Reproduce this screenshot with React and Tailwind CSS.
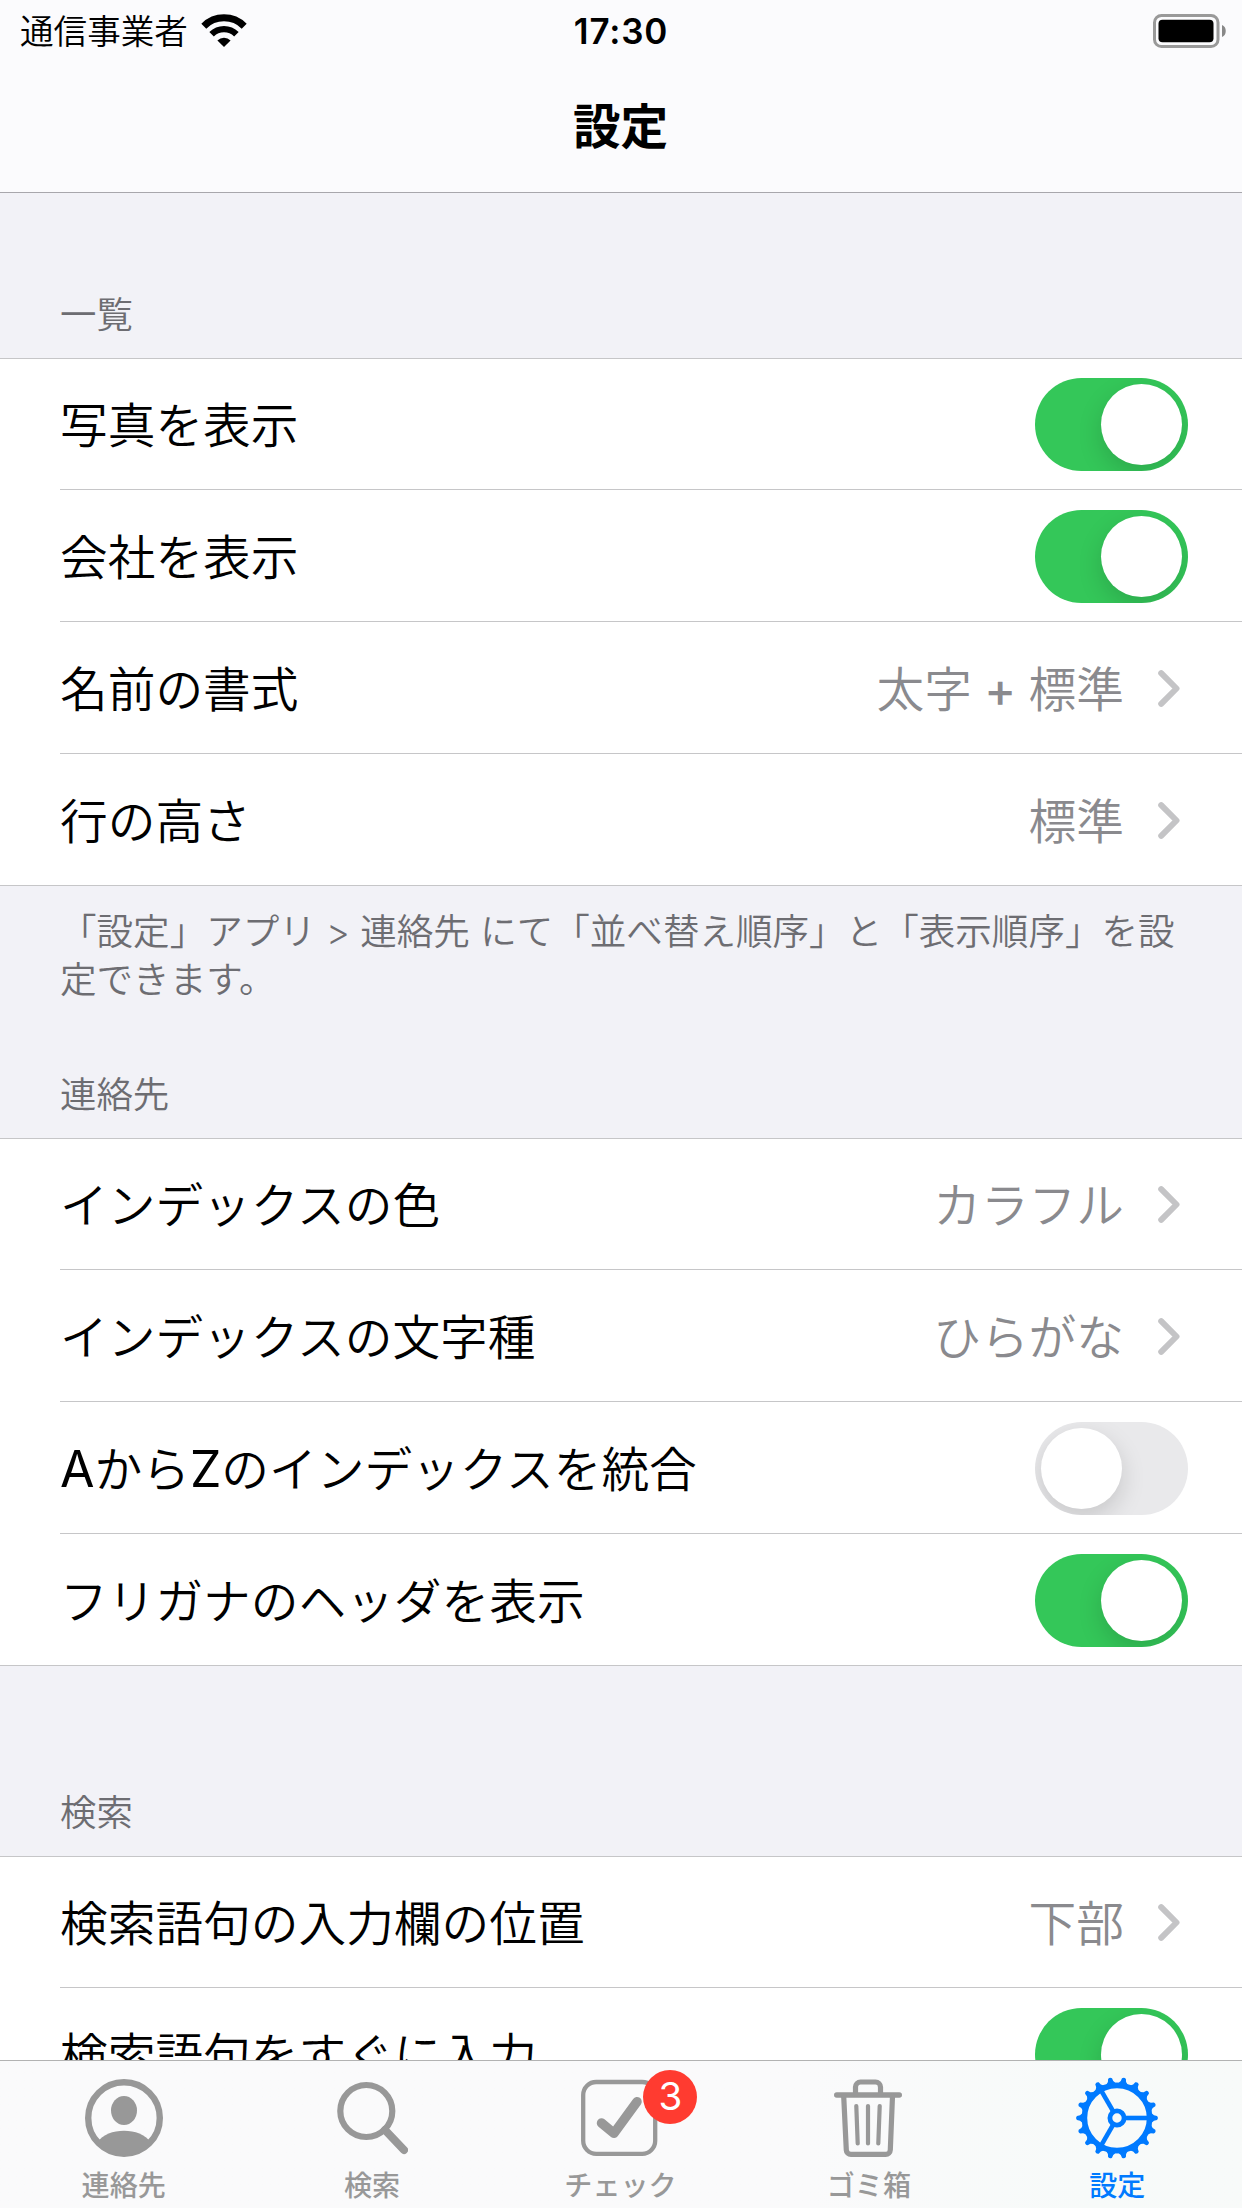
import { useState } from "react";

const initialSections = [
  {
    title: "一覧",
    headerClass: "h-[165px]",
    rows: [
      { id: "photo", label: "写真を表示", on: true },
      { id: "company", label: "会社を表示", on: true },
      { id: "format", label: "名前の書式", value: "太字 + 標準" },
      { id: "height", label: "行の高さ", value: "標準" },
    ],
    footer: ["「設定」アプリ > 連絡先 にて「並べ替え順序」と「表示順序」を設", "定できます。"],
  },
  {
    title: "連絡先",
    headerClass: "h-[124px]",
    rows: [
      { id: "color", label: "インデックスの色", value: "カラフル" },
      { id: "script", label: "インデックスの文字種", value: "ひらがな" },
      { id: "merge", label: "AからZのインデックスを統合", on: false },
      { id: "kana", label: "フリガナのヘッダを表示", on: true },
    ],
  },
  {
    title: "検索",
    headerClass: "h-[190px]",
    rows: [
      { id: "position", label: "検索語句の入力欄の位置", value: "下部" },
      { id: "instant", label: "検索語句をすぐに入力", on: true },
    ],
  },
];

function WifiIcon() {
  return (
    <svg width="46" height="33" viewBox="0 0 46 33" fill="none">
      <path d="M2.8 12.2a28.6 28.6 0 0 1 40.4 0" stroke="#000" strokeWidth="7" />
      <path d="M10.6 20.2a17.6 17.6 0 0 1 24.8 0" stroke="#000" strokeWidth="6.4" />
      <path d="M23 33l-6.6-6.6a9.4 9.4 0 0 1 13.2 0z" fill="#000" />
    </svg>
  );
}

function BatteryIcon() {
  return (
    <svg width="74" height="34" viewBox="0 0 74 34" fill="none">
      <rect x="1.5" y="1.5" width="63.5" height="31" rx="7" stroke="#999" strokeWidth="3" />
      <rect x="5.5" y="5.7" width="55" height="22.6" rx="4" fill="#000" />
      <path d="M69 11c5 1.5 5 10.5 0 12z" fill="#888" />
    </svg>
  );
}

function Chevron() {
  return (
    <svg width="22" height="37" viewBox="0 0 22 37" fill="none" className="mt-px mr-[62px] ml-[34px] shrink-0">
      <path d="M3.2 3.2L18.5 18.5L3.2 33.8" stroke="#c4c4c6" strokeWidth="6" strokeLinecap="round" strokeLinejoin="round" />
    </svg>
  );
}

function Toggle({ on, onClick }) {
  return (
    <button
      role="switch"
      aria-checked={on}
      onClick={onClick}
      className={`mt-px mr-[54px] flex h-[93px] w-[153px] shrink-0 overflow-hidden rounded-full p-1.5 ${
        on ? "justify-end bg-[#34c759]" : "justify-start bg-[#e9e9eb]"
      }`}
    >
      <span className="size-[81px] rounded-full bg-white shadow-[0_9px_24px_rgba(0,0,0,0.15)]" />
    </button>
  );
}

// Latin letters and signs are set heavier than the kana around them
function MixedText({ text }) {
  return text.split(/([A-Za-z]+|\+)/).map((part, i) => {
    if (part === "+") {
      return <span key={i} className="-mx-px font-medium">{part}</span>;
    }
    if (/^[A-Za-z]+$/.test(part)) {
      return <span key={i} className="text-[50px] leading-none font-normal">{part}</span>;
    }
    return part;
  });
}

function Row({ row, last, onToggle }) {
  return (
    <div className={`h-[132px] bg-white ${last ? "" : "pl-[60px]"}`}>
      <div className={`flex h-full items-center border-b border-[#c6c6c8] ${last ? "pl-[60px]" : ""}`}>
        <span className="flex-1 pt-[4px] text-[47.7px] leading-[72px] whitespace-nowrap text-black">
          <MixedText text={row.label} />
        </span>
        {row.value ? (
          <>
            <span className="pt-[4px] text-[47.7px] leading-[72px] whitespace-nowrap text-[#8a8a8e]">
              <MixedText text={row.value} />
            </span>
            <Chevron />
          </>
        ) : (
          <Toggle on={row.on} onClick={() => onToggle(row.id)} />
        )}
      </div>
    </div>
  );
}

function ContactIcon() {
  return (
    <svg width="78" height="78" viewBox="0 0 78 78">
      <circle cx="39" cy="39" r="35.8" fill="none" stroke="currentColor" strokeWidth="6.4" />
      <ellipse cx="39" cy="31.5" rx="13" ry="14.5" fill="currentColor" />
      <path d="M12 63.5C18 55.5 28 51.8 39 51.8S60 55.5 66 63.5C59 72 50 76 39 76S19 72 12 63.5z" fill="currentColor" />
    </svg>
  );
}

function SearchIcon() {
  return (
    <svg width="72" height="78" viewBox="0 0 72 78" fill="none" stroke="currentColor">
      <circle cx="30.3" cy="32" r="26" strokeWidth="6.2" />
      <path d="M49 51L68 71" strokeWidth="8" strokeLinecap="round" />
    </svg>
  );
}

function CheckIcon() {
  return (
    <svg width="78" height="78" viewBox="0 0 78 78" fill="none" stroke="currentColor">
      <rect x="2.2" y="3" width="72" height="71.8" rx="13" strokeWidth="4.3" />
      <path d="M20.5 44L33 54.3L56 22.7" strokeWidth="9.5" strokeLinecap="round" strokeLinejoin="round" />
    </svg>
  );
}

function TrashIcon() {
  return (
    <svg width="70" height="78" viewBox="0 0 70 78" fill="none" stroke="currentColor" strokeLinecap="round">
      <path d="M2.7 16H65.3" strokeWidth="5.4" />
      <path d="M21.5 15V8a5 5 0 0 1 5-5h15a5 5 0 0 1 5 5v7" strokeWidth="5.2" />
      <path d="M9.7 17L12.3 71a4.6 4.6 0 0 0 4.6 4.4H51.7a4.6 4.6 0 0 0 4.6-4.4L58.5 17" strokeWidth="5.2" />
      <path d="M22.3 27L23.7 64.5M34 27V64.5M45.7 27L44.3 64.5" strokeWidth="4.2" />
    </svg>
  );
}

function GearIcon() {
  const teeth = Array.from({ length: 18 }, (_, i) => i * 20);
  return (
    <svg width="82" height="82" viewBox="-41 -41 82 82" fill="none" stroke="currentColor">
      <circle r="32.6" strokeWidth="5.6" />
      <circle r="7.1" strokeWidth="4.8" />
      {teeth.map((a) => (
        <path
          key={a}
          d="M33.5 -5.8L37 -2.7L40 -2Q41.8 0 40 2L37 2.7L33.5 5.8z"
          fill="currentColor"
          stroke="none"
          transform={`rotate(${a})`}
        />
      ))}
      {[0, 120, 240].map((a) => (
        <path key={a} d="M8.5 0H31" strokeWidth="4.6" transform={`rotate(${a})`} />
      ))}
    </svg>
  );
}

const tabs = [
  { label: "連絡先", icon: ContactIcon },
  { label: "検索", icon: SearchIcon },
  { label: "チェック", icon: CheckIcon, badge: 3 },
  { label: "ゴミ箱", icon: TrashIcon },
  { label: "設定", icon: GearIcon },
];

function App() {
  const [sections, setSections] = useState(initialSections);
  const [active, setActive] = useState("設定");

  const handleToggle = (id) => {
    setSections((prev) =>
      prev.map((s) => ({
        ...s,
        rows: s.rows.map((r) => (r.id === id ? { ...r, on: !r.on } : r)),
      }))
    );
  };

  return (
    <div
      lang="ja"
      className="flex h-[2208px] w-[1242px] flex-col overflow-hidden bg-[#f2f2f7] font-[Inter,'Noto_Sans_CJK_JP',sans-serif] font-[350]"
    >
      {/* Status bar and title */}
      <header className="h-[193px] shrink-0 border-b border-[#a8a7ac] bg-[#fbfbfd] text-black">
        <div className="grid h-[60px] grid-cols-3 items-center pt-px pr-[15px] pl-[20px]">
          <div className="flex items-center gap-[13px]">
            <span className="pt-[2px] text-[33.6px] leading-[40px]">通信事業者</span>
            <WifiIcon />
          </div>
          <span className="pt-px pr-[5px] text-center text-[35px] leading-[40px] font-semibold tracking-[0.8px]">17:30</span>
          <div className="flex justify-end">
            <BatteryIcon />
          </div>
        </div>
        <h1 className="pt-[33px] pr-px text-center text-[47.6px] leading-[68px] font-bold">設定</h1>
      </header>

      {/* Settings list */}
      <main className="min-h-0 flex-1 overflow-hidden">
        {sections.map((section) => (
          <section key={section.title}>
            <h2
              className={`flex items-end pb-[19px] pl-[60px] text-[36.4px] leading-[48px] font-[350] text-[#6d6d72] ${section.headerClass}`}
            >
              {section.title}
            </h2>
            <div className="relative">
              <div className="absolute top-0 z-10 h-px w-full bg-[#c6c6c8]" />
              {section.rows.map((row, i) => (
                <Row key={row.id} row={row} last={i === section.rows.length - 1} onToggle={handleToggle} />
              ))}
            </div>
            {section.footer && (
              <div className="h-[128px] pt-[22px] pl-[60px] text-[36.55px] leading-[48px] whitespace-nowrap text-[#6d6d72]">
                {section.footer.map((line) => (
                  <p key={line}>{line}</p>
                ))}
              </div>
            )}
          </section>
        ))}
      </main>

      {/* Tab bar */}
      <nav className="grid h-[148px] shrink-0 grid-cols-5 border-t border-[#b2b2b2] bg-linear-to-r from-[#fafafb] from-65% via-[#f7faf9] via-88% to-[#f8faf9]">
        {tabs.map(({ label, icon: Icon, badge }) => (
          <button
            key={label}
            onClick={() => setActive(label)}
            className={`flex flex-col items-center pr-px ${active === label ? "text-[#007aff]" : "text-[#989898]"}`}
          >
            <span className="relative mt-[16px] flex h-[82px] items-center">
              <Icon />
              {badge && (
                <span className="absolute top-[-7px] left-[62px] flex size-[54px] items-center justify-center rounded-full bg-[#ff3b30] text-[38.5px] font-normal text-white">
                  {badge}
                </span>
              )}
            </span>
            <span className="mt-[7px] text-[28.1px] leading-[40px] font-medium">{label}</span>
          </button>
        ))}
      </nav>
    </div>
  );
}

export default App;
